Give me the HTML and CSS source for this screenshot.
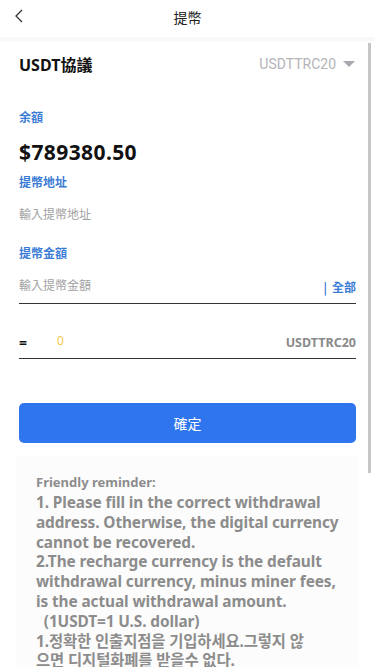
FILE: index.html
```html
<!DOCTYPE html>
<html lang="zh-Hant">
<head>
<meta charset="utf-8">
<meta name="viewport" content="width=device-width, initial-scale=1">
<link rel="stylesheet" href="styles.css">
</head>
<body>
<div class="app">
  <header class="topbar">
    <svg class="back" width="10" height="16" viewBox="0 0 10 16"><path d="M8 2 L2 8 L8 14" fill="none" stroke="#333" stroke-width="1.3"/></svg>
    <div class="title">提幣</div>
  </header>
  <main class="content">
    <div class="protocol">
      <div class="proto-label">USDT協議</div>
      <div class="proto-select">USDTTRC20 <span class="tri"></span></div>
    </div>
    <div class="label balance-label">余額</div>
    <div class="balance">$789380.50</div>
    <div class="label addr-label">提幣地址</div>
    <div class="placeholder addr-ph">輸入提幣地址</div>
    <div class="label amt-label">提幣金額</div>
    <div class="field">
      <span class="placeholder">輸入提幣金額</span>
      <span class="all"><span class="bar">|</span>全部</span>
    </div>
    <div class="field conv">
      <span class="eq">=</span>
      <span class="zero">0</span>
      <span class="unit">USDTTRC20</span>
    </div>
    <button class="submit">確定</button>
  </main>
  <section class="reminder">
    <div class="rem-title">Friendly reminder:</div>
    <div class="rem-body">1. Please fill in the correct withdrawal<br>address. Otherwise, the digital currency<br>cannot be recovered.<br>2.The recharge currency is the default<br>withdrawal currency, minus miner fees,<br>is the actual withdrawal amount.<br>&nbsp;&nbsp;(1USDT=1 U.S. dollar)<br>1.정확한 인출지점을 기입하세요.그렇지 않<br>으면 디지털화폐를 받을수 없다.</div>
  </section>
  <div class="scroll-thumb"></div>
</div>
</body>
</html>
```
FILE: styles.css
```css
* { box-sizing: border-box; }
html, body { margin: 0; padding: 0; background: #fff; }
body {
  font-family: "Open Sans", "Noto Sans", "Noto Sans CJK TC", "Noto Sans CJK KR", sans-serif;
  color: #111;
  width: 375px;
  height: 667px;
  overflow: hidden;
}
.app { position: relative; height: 667px; overflow: hidden; }
.topbar {
  height: 40px;
  display: flex;
  align-items: center;
  justify-content: center;
  position: relative;
  box-shadow: 0 1px 3px rgba(0,0,0,0.04);
  border-bottom: 3px solid #f8f8f8;
}
.back { position: absolute; left: 14px; top: 8px; }
.title { font-size: 14px; color: #222; font-family: "Noto Sans CJK TC", sans-serif; margin-top: -4px; }
.content { padding: 0 19px; }
.protocol {
  display: flex;
  justify-content: space-between;
  align-items: center;
  height: 46px;
  margin-top: 1px;
}
.proto-label { font-size: 16px; font-weight: 700; color: #111; font-family: "Noto Sans", "Noto Sans CJK TC", sans-serif; }
.proto-select { font-size: 14px; color: #b3b3b8; display: flex; align-items: center; gap: 7px; margin-right: 1px; font-family: "Roboto", sans-serif; }
.tri { width: 0; height: 0; border-left: 6px solid transparent; border-right: 6px solid transparent; border-top: 6px solid #a8a8b0; }
.label { font-size: 12px; font-weight: 700; color: #3a7bd5; font-family: "Noto Sans CJK TC", sans-serif; }
.balance-label { margin-top: 22px; line-height: 16px; }
.balance { font-size: 21px; font-weight: 700; color: #111; margin-top: 14px; line-height: 26px; letter-spacing: 0.4px; font-family: "Noto Sans", sans-serif; }
.addr-label { margin-top: 9px; line-height: 16px; }
.placeholder { font-size: 12px; color: #a2a2a2; font-family: "Noto Sans CJK TC", sans-serif; }
.addr-ph { display: block; margin-top: 16px; line-height: 16px; }
.amt-label { margin-top: 23px; line-height: 16px; }
.field {
  display: flex;
  align-items: center;
  border-bottom: 1px solid #333;
  height: 43px;
  padding-top: 9px;
}
.field .placeholder { flex: 1; margin-top: -4px; }
.all { font-size: 12px; font-weight: 700; color: #3a7bd5; font-family: "Noto Sans CJK TC", sans-serif; display: flex; align-items: center; }
.bar { margin-right: 5px; }
.conv { margin-top: 0; height: 55px; padding-top: 0; align-items: flex-end; padding-bottom: 6px; }
.eq { font-size: 14px; font-weight: 700; width: 38px; color: #111; line-height: 18px; }
.zero { font-size: 12px; color: #f2c53d; flex: 1; line-height: 18px; position: relative; top: -2px; }
.unit { font-size: 12.5px; font-weight: 700; color: #8a8a8a; line-height: 18px; font-family: "Noto Sans", sans-serif; }
.submit {
  display: block;
  width: 100%;
  height: 40px;
  margin-top: 44px;
  border: 0;
  border-radius: 5px;
  background: #2f76ee;
  color: #fff;
  font-size: 14px;
  font-family: "Noto Sans CJK TC", sans-serif;
}
.reminder {
  margin: 13px 16px 0 16px;
  background: #fcfcfc;
  padding: 17px 20px 0 20px;
  color: #8c8c8c;
  height: 220px;
}
.rem-title { font-size: 13px; font-weight: 700; line-height: 18px; font-family: "Noto Sans", sans-serif; }
.rem-body { font-size: 15.4px; font-weight: 700; line-height: 19.8px; margin-top: 2px; white-space: nowrap; font-family: "Noto Sans", "Noto Sans CJK KR", sans-serif; letter-spacing: -0.1px; }
.scroll-thumb {
  position: absolute;
  left: 368px;
  top: 43px;
  width: 3px;
  height: 430px;
  background: #c6c6c6;
}
```
